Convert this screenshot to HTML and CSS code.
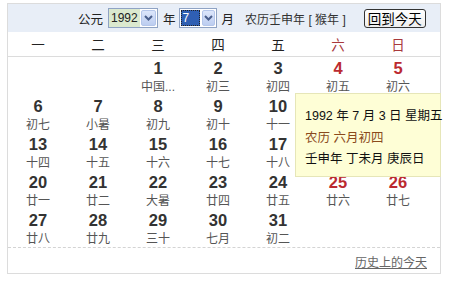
FILE: index.html
```html
<!DOCTYPE html>
<html lang="zh">
<head>
<meta charset="utf-8">
<link rel="stylesheet" href="styles.css">
</head>
<body>
<div class="cal">
  <div class="top">
    <span class="lbl">公元</span>
    <span class="sel sel-year">
      <span class="val">1992</span>
      <span class="arr"><svg width="9" height="6" viewBox="0 0 9 6"><path d="M1 1 L4.5 4.5 L8 1" fill="none" stroke="#4a5f8c" stroke-width="2"/></svg></span>
    </span>
    <span class="lbl">年</span>
    <span class="sel sel-month">
      <span class="val"><span class="hl">7</span></span>
      <span class="arr"><svg width="9" height="6" viewBox="0 0 9 6"><path d="M1 1 L4.5 4.5 L8 1" fill="none" stroke="#4a5f8c" stroke-width="2"/></svg></span>
    </span>
    <span class="lbl">月</span>
    <span class="lunar-year">农历壬申年 [ 猴年 ]</span>
    <span class="btn">回到今天</span>
  </div>
  <div class="week">
    <span>一</span><span>二</span><span>三</span><span>四</span><span>五</span><span class="we">六</span><span class="we">日</span>
  </div>
  <div class="days">
    <div class="d"></div><div class="d"></div>
    <div class="d"><b>1</b><i>中国...</i></div>
    <div class="d"><b>2</b><i>初三</i></div>
    <div class="d"><b>3</b><i>初四</i></div>
    <div class="d red"><b>4</b><i>初五</i></div>
    <div class="d red"><b>5</b><i>初六</i></div>
    <div class="d"><b>6</b><i>初七</i></div>
    <div class="d"><b>7</b><i>小暑</i></div>
    <div class="d"><b>8</b><i>初九</i></div>
    <div class="d"><b>9</b><i>初十</i></div>
    <div class="d"><b>10</b><i>十一</i></div>
    <div class="d red"><b>11</b><i>十二</i></div>
    <div class="d red"><b>12</b><i>十三</i></div>
    <div class="d"><b>13</b><i>十四</i></div>
    <div class="d"><b>14</b><i>十五</i></div>
    <div class="d"><b>15</b><i>十六</i></div>
    <div class="d"><b>16</b><i>十七</i></div>
    <div class="d"><b>17</b><i>十八</i></div>
    <div class="d red"><b>18</b><i>十九</i></div>
    <div class="d red"><b>19</b><i>二十</i></div>
    <div class="d"><b>20</b><i>廿一</i></div>
    <div class="d"><b>21</b><i>廿二</i></div>
    <div class="d"><b>22</b><i>大暑</i></div>
    <div class="d"><b>23</b><i>廿四</i></div>
    <div class="d"><b>24</b><i>廿五</i></div>
    <div class="d red"><b>25</b><i>廿六</i></div>
    <div class="d red"><b>26</b><i>廿七</i></div>
    <div class="d"><b>27</b><i>廿八</i></div>
    <div class="d"><b>28</b><i>廿九</i></div>
    <div class="d"><b>29</b><i>三十</i></div>
    <div class="d"><b>30</b><i>七月</i></div>
    <div class="d"><b>31</b><i>初二</i></div>
  </div>
  <div class="foot"><a class="hist">历史上的今天</a></div>
  <div class="tip">
    <div>1992 年 7 月 3 日 星期五</div>
    <div class="tl">农历 六月初四</div>
    <div>壬申年 丁未月 庚辰日</div>
  </div>
</div>
</body>
</html>
```
FILE: styles.css
```css
html, body { margin: 0; padding: 0; background: #fff; }
body {
  font-family: "Liberation Sans", "Noto Sans CJK SC", sans-serif;
  color: #222;
}
.cal {
  position: relative;
  margin: 3px 0 0 7px;
  width: 432px;
  height: 269px;
  border: 1px solid #dcdcdc;
  display: flex;
  flex-direction: column;
}
.top {
  height: 28px;
  background: #e8eef7;
  display: flex;
  align-items: center;
  padding-left: 70px;
  font-size: 12px;
}
.lbl { font-size: 12.5px; }
.sel {
  display: flex;
  height: 18px;
  border: 1px solid #8fa3c4;
  background: #fff;
  box-sizing: content-box;
}
.sel .val {
  display: flex;
  align-items: center;
  font-size: 12px;
}
.sel-year { margin: 0 5px; width: 48px; }
.sel-year .val { width: 31px; background: #dbe9cf; padding-left: 2px; box-sizing: border-box; }
.sel-month { margin: 0 5px 0 3px; width: 36px; }
.sel-month .val { width: 21px; padding: 1px 1px; box-sizing: border-box; }
.hl {
  display: block;
  width: 19px;
  height: 16px;
  background: #2f5fb3;
  color: #fff;
  outline: 1px dotted #222;
  outline-offset: -1px;
  line-height: 16px;
  padding-left: 2px;
  box-sizing: border-box;
}
.arr {
  flex: 1;
  margin: 1px;
  background: linear-gradient(#dce6fb, #bccdf0);
  border: 1px solid #b4c6ea;
  border-radius: 2px;
  display: flex;
  align-items: center;
  justify-content: center;
}
.lunar-year { margin-left: 11px; font-size: 12px; color: #333; }
.btn {
  margin-left: 18px;
  width: 62px;
  height: 19px;
  box-sizing: border-box;
  border: 1px solid #333;
  border-radius: 3px;
  background: linear-gradient(#fff, #eee);
  font-size: 13.5px;
  display: flex;
  align-items: center;
  justify-content: center;
  color: #000;
}
.week {
  height: 24px;
  display: grid;
  grid-template-columns: repeat(7, 60px);
  align-items: center;
  border-bottom: 1px solid #dcdcdc;
  font-size: 13.5px;
  color: #222;
}
.week span { text-align: center; }
.week .we { color: #a8393c; }
.days {
  display: grid;
  grid-template-columns: repeat(7, 60px);
  grid-auto-rows: 38px;
  height: 190px;
}
.d { display: flex; flex-direction: column; align-items: center; }
.d b {
  font-family: "Liberation Sans", Arial, sans-serif;
  font-weight: bold;
  font-size: 16.5px;
  line-height: 22px;
  color: #333;
}
.d i {
  font-style: normal;
  font-size: 12px;
  line-height: 16px;
  color: #555;
}
.d.red b { color: #bb2a30; }
.foot {
  flex: 1;
  border-top: 1px dashed #d4d4d4;
  display: flex;
  justify-content: flex-end;
  align-items: center;
  padding-right: 13px;
}
.hist {
  font-size: 12px;
  color: #666;
  text-decoration: underline;
  margin-top: 1px;
}
.tip {
  position: absolute;
  left: 287px;
  top: 89px;
  width: 146px;
  height: 84px;
  box-sizing: border-box;
  background: #fefed6;
  border: 1px solid #e6e6b8;
  padding: 12px 0 0 9px;
  font-size: 12.5px;
  line-height: 21.5px;
  color: #111;
  white-space: nowrap;
}
.tip .tl { color: #8a4a1c; }
```
